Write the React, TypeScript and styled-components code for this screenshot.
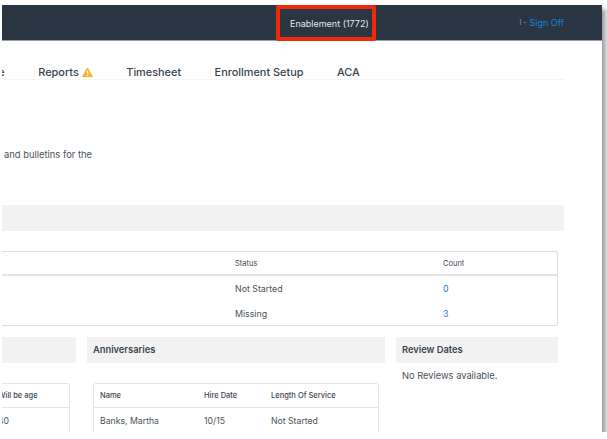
import React from "react";
import styled, { createGlobalStyle } from "styled-components";

const GlobalStyle = createGlobalStyle`
  html, body {
    margin: 0;
    padding: 0;
    background: #fff;
    font-family: "Inter", "Liberation Sans", sans-serif;
    overflow: hidden;
  }
`;

const Sheet = styled.div`
  width: 600px;
  height: 427px;
  margin: 5px 0 0 2px;
  background: #fff;
  overflow: hidden;
  box-shadow: 4px 4px 4px rgba(0, 0, 0, 0.36);
`;

const TopBar = styled.header`
  display: flex;
  align-items: stretch;
  height: 36px;
  padding: 0 38px 0 274px;
  box-sizing: border-box;
  background: #2a3642;
  border-bottom: 1px solid #95a1a8;
`;

const OrgLabel = styled.div`
  display: flex;
  align-items: center;
  width: 100px;
  margin-bottom: -1px;
  padding-left: 10px;
  box-sizing: border-box;
  border: 4px solid #ee2a0a;
  border-radius: 2px;
  color: #e4e7e9;
  font-size: 9px;
  white-space: nowrap;
`;

const UserBox = styled.div`
  display: flex;
  align-items: center;
  gap: 3px;
  margin-left: auto;
  color: #8f99a1;
  font-size: 7px;
`;

const SignOff = styled.a`
  color: #1482dc;
  font-size: 9px;
`;

const NavBar = styled.nav`
  display: flex;
  align-items: center;
  gap: 33.5px;
  width: 562px;
  height: 39px;
  padding-top: 24px;
  box-sizing: border-box;
  border-bottom: 1px solid #f5f5f5;
`;

const NavItem = styled.a<{ $clipped?: boolean }>`
  display: flex;
  align-items: center;
  gap: 3px;
  margin-left: ${(p) => (p.$clipped ? "-28px" : "0")};
  color: #39444f;
  font-size: 10.9px;
  font-weight: 500;
  white-space: nowrap;
`;

const Intro = styled.p`
  margin: 68px 0 0 2px;
  color: #4a525a;
  font-size: 9.4px;
  line-height: 14px;
`;

const Band = styled.div`
  width: 562px;
  height: 26px;
  margin-top: 43px;
  background: #f2f2f2;
`;

const StatusTable = styled.div`
  width: 556px;
  height: 75px;
  margin-top: 20px;
  box-sizing: border-box;
  border: 1px solid #dedede;
  border-left: none;
  border-radius: 0 3px 3px 0;
`;

const StatusRow = styled.div<{ $head?: boolean }>`
  display: grid;
  grid-template-columns: 233px 208px 1fr;
  align-items: center;
  height: ${(p) => (p.$head ? "24px" : "25px")};
  box-sizing: border-box;
  border-bottom: ${(p) => (p.$head ? "2px solid #e4e4e4" : "none")};
  color: ${(p) => (p.$head ? "#3c4752" : "#4a525a")};
  font-size: ${(p) => (p.$head ? "7.5px" : "8.8px")};
`;

const CountLink = styled.a`
  color: #1a78d8;
`;

const Sections = styled.div`
  display: grid;
  grid-template-columns: 74px 298px 162px;
  column-gap: 11px;
  margin-top: 11px;
`;

const SectionTitle = styled.h3`
  display: flex;
  align-items: center;
  height: 26px;
  margin: 0;
  padding: 0 0 1px 6px;
  box-sizing: border-box;
  background: #f2f2f2;
  color: #39444f;
  font-size: 9.3px;
  font-weight: 600;
`;

const DataTable = styled.div<{ $inset?: boolean }>`
  margin: 20px 6px 0 ${(p) => (p.$inset ? "6px" : "0")};
  height: 60px;
  box-sizing: border-box;
  border: 1px solid #e4e4e4;
  border-left: ${(p) => (p.$inset ? "1px solid #e4e4e4" : "none")};
  border-radius: ${(p) => (p.$inset ? "3px 3px 0 0" : "0 3px 0 0")};
`;

const DataRow = styled.div<{ $head?: boolean; $columns: string }>`
  display: grid;
  grid-template-columns: ${(p) => p.$columns};
  align-items: center;
  height: ${(p) => (p.$head ? "24px" : "25px")};
  box-sizing: border-box;
  padding-left: ${(p) => (p.$columns === "1fr" ? "0" : "6px")};
  border-bottom: ${(p) => (p.$head ? "1px solid #e4e4e4" : "none")};
  color: ${(p) => (p.$head ? "#3c4752" : "#4a525a")};
  font-size: ${(p) => (p.$head ? "7.5px" : "8.7px")};
  font-weight: ${(p) => (p.$head ? 500 : 400)};
  white-space: nowrap;
`;

const Clipped = styled.span`
  margin-left: -4px;
`;

const EmptyNote = styled.p`
  margin: 6px 0 0 6px;
  color: #4a525a;
  font-size: 9.3px;
  line-height: 13px;
`;

const WarningIcon = () => (
  <svg width="11" height="11" viewBox="0 0 12 11">
    <path
      d="M6 .6c.4 0 .7.2.9.5l4.700 8.100c.4.7-.1 1.500-.9 1.500H1.300c-.8 0-1.300-.8-.9-1.500L5.100 1.100C5.300.8 5.600.6 6 .6z"
      fill="#f7b733"
    />
    <rect x="5.300" y="3.400" width="1.400" height="3.800" rx=".5" fill="#fff" />
    <rect x="5.300" y="7.900" width="1.400" height="1.400" rx=".5" fill="#fff" />
  </svg>
);

const nameColumns = "104px 67px 1fr";

export default function App() {
  return (
    <>
      <GlobalStyle />
      <Sheet>
        <TopBar>
          <OrgLabel>Enablement (1772)</OrgLabel>
          <UserBox>
            <span>I -</span>
            <SignOff>Sign Off</SignOff>
          </UserBox>
        </TopBar>
        <NavBar>
          <NavItem $clipped>Home</NavItem>
          <NavItem>
            Reports <WarningIcon />
          </NavItem>
          <NavItem>Timesheet</NavItem>
          <NavItem>Enrollment Setup</NavItem>
          <NavItem>ACA</NavItem>
        </NavBar>
        <Intro>and bulletins for the</Intro>
        <Band />
        <StatusTable>
          <StatusRow $head>
            <span />
            <span>Status</span>
            <span>Count</span>
          </StatusRow>
          <StatusRow>
            <span />
            <span>Not Started</span>
            <CountLink>0</CountLink>
          </StatusRow>
          <StatusRow>
            <span />
            <span>Missing</span>
            <CountLink>3</CountLink>
          </StatusRow>
        </StatusTable>
        <Sections>
          <div>
            <SectionTitle />
            <DataTable>
              <DataRow $head $columns="1fr">
                <Clipped>Will be age</Clipped>
              </DataRow>
              <DataRow $columns="1fr">
                <Clipped>40</Clipped>
              </DataRow>
            </DataTable>
          </div>
          <div>
            <SectionTitle>Anniversaries</SectionTitle>
            <DataTable $inset>
              <DataRow $head $columns={nameColumns}>
                <span>Name</span>
                <span>Hire Date</span>
                <span>Length Of Service</span>
              </DataRow>
              <DataRow $columns={nameColumns}>
                <span>Banks, Martha</span>
                <span>10/15</span>
                <span>Not Started</span>
              </DataRow>
            </DataTable>
          </div>
          <div>
            <SectionTitle>Review Dates</SectionTitle>
            <EmptyNote>No Reviews available.</EmptyNote>
          </div>
        </Sections>
      </Sheet>
    </>
  );
}
